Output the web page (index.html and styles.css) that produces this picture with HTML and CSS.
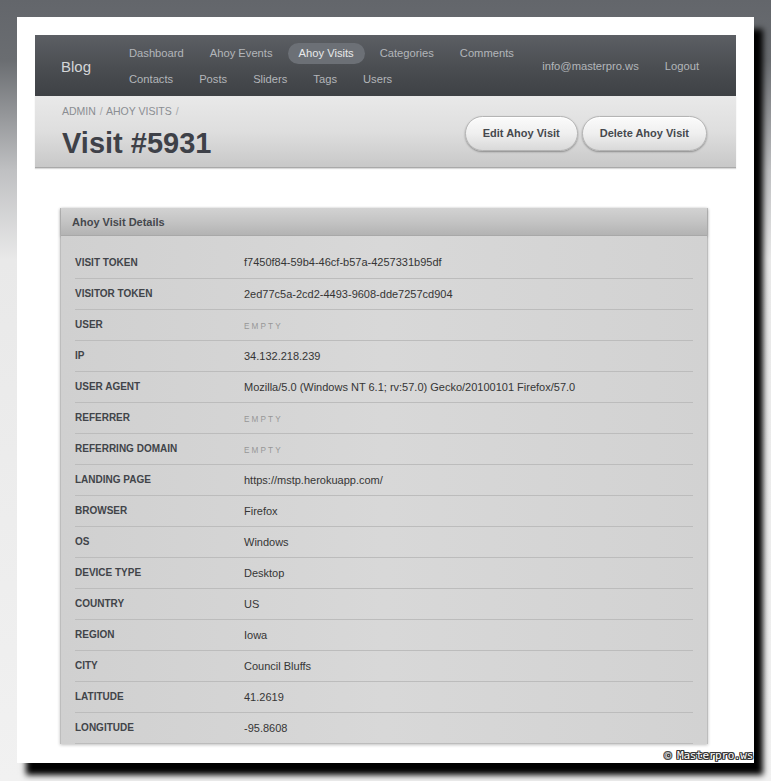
FILE: index.html
```html
<!DOCTYPE html>
<html>
<head>
<meta charset="utf-8">
<link rel="stylesheet" href="styles.css">
</head>
<body>
<div class="card">
  <nav class="navbar">
    <div class="brand">Blog</div>
    <div class="nav-links">
      <div class="nav-row">
        <a class="nav-link">Dashboard</a>
        <a class="nav-link">Ahoy Events</a>
        <a class="nav-link active">Ahoy Visits</a>
        <a class="nav-link">Categories</a>
        <a class="nav-link">Comments</a>
      </div>
      <div class="nav-row">
        <a class="nav-link">Contacts</a>
        <a class="nav-link">Posts</a>
        <a class="nav-link">Sliders</a>
        <a class="nav-link">Tags</a>
        <a class="nav-link">Users</a>
      </div>
    </div>
    <div class="nav-right">
      <a class="nav-link">info@masterpro.ws</a>
      <a class="nav-link">Logout</a>
    </div>
  </nav>
  <header class="page-header">
    <div class="header-left">
      <div class="breadcrumb">ADMIN <span class="sep">/</span> AHOY VISITS <span class="sep">/</span></div>
      <h1 class="title">Visit #5931</h1>
    </div>
    <div class="actions">
      <a class="btn">Edit Ahoy Visit</a>
      <a class="btn">Delete Ahoy Visit</a>
    </div>
  </header>
  <section class="panel">
    <div class="panel-heading">Ahoy Visit Details</div>
    <div class="panel-body">
      <table class="details">
        <tr><th>VISIT TOKEN</th><td>f7450f84-59b4-46cf-b57a-4257331b95df</td></tr>
        <tr><th>VISITOR TOKEN</th><td>2ed77c5a-2cd2-4493-9608-dde7257cd904</td></tr>
        <tr><th>USER</th><td><span class="empty">EMPTY</span></td></tr>
        <tr><th>IP</th><td>34.132.218.239</td></tr>
        <tr><th>USER AGENT</th><td>Mozilla/5.0 (Windows NT 6.1; rv:57.0) Gecko/20100101 Firefox/57.0</td></tr>
        <tr><th>REFERRER</th><td><span class="empty">EMPTY</span></td></tr>
        <tr><th>REFERRING DOMAIN</th><td><span class="empty">EMPTY</span></td></tr>
        <tr><th>LANDING PAGE</th><td>https://mstp.herokuapp.com/</td></tr>
        <tr><th>BROWSER</th><td>Firefox</td></tr>
        <tr><th>OS</th><td>Windows</td></tr>
        <tr><th>DEVICE TYPE</th><td>Desktop</td></tr>
        <tr><th>COUNTRY</th><td>US</td></tr>
        <tr><th>REGION</th><td>Iowa</td></tr>
        <tr><th>CITY</th><td>Council Bluffs</td></tr>
        <tr><th>LATITUDE</th><td>41.2619</td></tr>
        <tr><th>LONGITUDE</th><td>-95.8608</td></tr>
      </table>
    </div>
  </section>
  <div class="watermark">© Masterpro.ws</div>
</div>
</body>
</html>
```

FILE: styles.css
```css
html, body {
  margin: 0;
  padding: 0;
  height: 100%;
}
body {
  font-family: "Liberation Sans", Arial, sans-serif;
  background: linear-gradient(to bottom, #63666b 0px, #6a6d71 60px, #bfc0c2 170px, #e9e9e9 260px, #f1f1f1 100%);
  overflow: hidden;
}
.card {
  position: relative;
  box-sizing: border-box;
  margin: 17px 0 0 17px;
  width: 737px;
  height: 746px;
  background: #fff;
  padding: 18px 18px 0 18px;
  box-shadow: 9px 12px 6px #000;
}
a { text-decoration: none; }

/* navbar */
.navbar {
  display: flex;
  align-items: flex-start;
  height: 61px;
  box-sizing: border-box;
  background: linear-gradient(to bottom, #5c5f64 0%, #4a4d51 55%, #3e4145 100%);
  padding: 8px 26px 0 26px;
}
.brand {
  color: #d4d6d8;
  font-size: 15px;
  line-height: 20px;
  margin-top: 14px;
  width: 57px;
  flex: none;
}
.nav-links {
  display: flex;
  flex-direction: column;
  gap: 5px;
}
.nav-row {
  display: flex;
  gap: 4px;
}
.nav-link {
  color: #b3b6ba;
  font-size: 11.2px;
  line-height: 21px;
  height: 21px;
  padding: 0 11px;
  border-radius: 11px;
  white-space: nowrap;
}
.nav-link.active {
  background: #6c7076;
  color: #e8e9ea;
}
.nav-right {
  margin-left: auto;
  display: flex;
  gap: 4px;
  margin-top: 13px;
  margin-right: 0;
}

/* page header */
.page-header {
  display: flex;
  align-items: flex-start;
  justify-content: space-between;
  height: 72px;
  box-sizing: border-box;
  background: linear-gradient(to bottom, #e9e9e9 0%, #dedede 50%, #c8c8c8 100%);
  border-bottom: 1px solid #a9a9a9;
  box-shadow: 0 1px 1px rgba(0,0,0,0.15);
  padding: 0 29px 0 27px;
}
.breadcrumb {
  margin-top: 8px;
  font-size: 10.5px;
  line-height: 14px;
  color: #8a8d92;
}
.breadcrumb .sep {
  color: #a6a8ab;
  padding: 0 1px;
}
.title {
  margin: 8px 0 0 0;
  font-size: 29px;
  line-height: 34px;
  font-weight: bold;
  color: #3e4148;
}
.actions {
  display: flex;
  gap: 4px;
  margin-top: 20px;
}
.btn {
  display: block;
  height: 35px;
  box-sizing: border-box;
  line-height: 33px;
  padding: 0 17px;
  border-radius: 18px;
  border: 1px solid #b4b4b4;
  background: linear-gradient(to bottom, #fbfbfb 0%, #efefef 50%, #d9d9d9 100%);
  box-shadow: 0 1px 2px rgba(0,0,0,0.35), inset 0 1px 0 #fff;
  font-size: 11px;
  font-weight: bold;
  color: #45484d;
  white-space: nowrap;
}

/* panel */
.panel {
  margin: 40px 28px 0 25px;
  background: #d4d4d4;
  border-left: 1px solid #bdbdbd;
  border-right: 1px solid #bdbdbd;
  box-shadow: 0 1px 3px rgba(0,0,0,0.25);
}
.panel-heading {
  height: 28px;
  box-sizing: border-box;
  padding: 0 11px;
  line-height: 28px;
  font-size: 11px;
  font-weight: bold;
  color: #45484d;
  background: linear-gradient(to bottom, #d2d2d2 0%, #c4c4c4 50%, #b3b3b3 100%);
  border-bottom: 1px solid #a8a8a8;
  box-shadow: 0 1px 3px rgba(0,0,0,0.25);
}
.panel-body {
  padding: 11px 14px 0 14px;
  background: linear-gradient(to right, #d0d0d0, #d8d8d8 50%, #d2d2d2);
}
.details {
  width: 100%;
  border-collapse: collapse;
}
.details tr {
  height: 31px;
  border-bottom: 1px solid #bcbcbc;
}
.details th {
  width: 169px;
  text-align: left;
  padding: 0;
  font-size: 10px;
  font-weight: bold;
  color: #414449;
  vertical-align: middle;
}
.details td {
  padding: 0;
  font-size: 11px;
  color: #353535;
  vertical-align: middle;
}
.empty {
  font-size: 8.2px;
  letter-spacing: 2.1px;
  color: #979797;
}

/* watermark overlay */
.watermark {
  position: absolute;
  right: 1px;
  bottom: 1px;
  font-family: "DejaVu Sans Mono", monospace;
  font-size: 11px;
  line-height: 13px;
  color: #fff;
  letter-spacing: -0.3px;
  text-shadow: 1px 0 0 #333, -1px 0 0 #333, 0 1px 0 #333, 0 -1px 0 #333, 1px 1px 0 #333, -1px -1px 0 #333, 1px -1px 0 #333, -1px 1px 0 #333;
}
```
